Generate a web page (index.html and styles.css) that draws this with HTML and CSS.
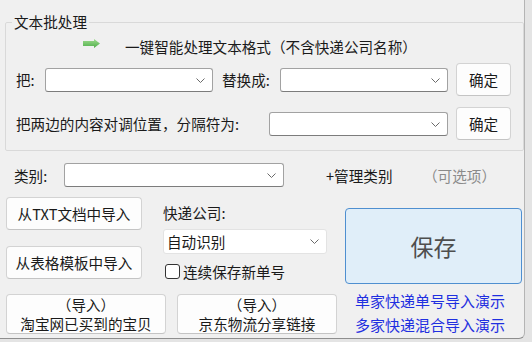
FILE: index.html
```html
<!DOCTYPE html>
<html lang="zh-CN">
<head>
  <meta charset="UTF-8" />
  <title>文本批处理</title>
  <link rel="stylesheet" href="styles.css">
</head>
<body>
  <div class="window">

    <fieldset class="group">
      <legend>文本批处理</legend>

      <div class="row tip">
        <svg class="arrow" width="17" height="9" viewBox="0 0 17 9">
          <defs>
            <linearGradient id="g" x1="0" y1="0" x2="0" y2="1">
              <stop offset="0" stop-color="#9edc8e"/>
              <stop offset="1" stop-color="#4fae4a"/>
            </linearGradient>
          </defs>
          <path d="M0 2 H11 V0 L17 4.5 L11 9 V7 H0 Z" fill="url(#g)"/>
        </svg>
        <span>一键智能处理文本格式（不含快递公司名称）</span>
      </div>

      <div class="row line">
        <label class="lbl lbl-ba">把:</label>
        <div class="combo w168"><svg class="chev" width="9" height="5" viewBox="0 0 9 5"><path d="M0.5 0.5 L4.5 4.5 L8.5 0.5" /></svg></div>
        <label class="lbl lbl-to">替换成:</label>
        <div class="combo w168"><svg class="chev" width="9" height="5" viewBox="0 0 9 5"><path d="M0.5 0.5 L4.5 4.5 L8.5 0.5" /></svg></div>
        <button class="btn ok">确定</button>
      </div>

      <div class="row line swap">
        <label class="lbl lbl-swap">把两边的内容对调位置，分隔符为:</label>
        <div class="combo w179"><svg class="chev" width="9" height="5" viewBox="0 0 9 5"><path d="M0.5 0.5 L4.5 4.5 L8.5 0.5" /></svg></div>
        <button class="btn ok">确定</button>
      </div>
    </fieldset>

    <div class="row cat">
      <label class="lbl lbl-cat">类别:</label>
      <div class="combo w220"><svg class="chev" width="9" height="5" viewBox="0 0 9 5"><path d="M0.5 0.5 L4.5 4.5 L8.5 0.5" /></svg></div>
      <span class="manage">+管理类别</span>
      <span class="optional">（可选项）</span>
    </div>

    <div class="main">
      <div class="col-import">
        <button class="btn imp">从TXT文档中导入</button>
        <button class="btn imp">从表格模板中导入</button>
      </div>

      <div class="col-express">
        <div class="exp-label">快递公司:</div>
        <div class="combo plain w164">自动识别<svg class="chev" width="9" height="5" viewBox="0 0 9 5"><path d="M0.5 0.5 L4.5 4.5 L8.5 0.5" /></svg></div>
        <label class="check"><span class="box"></span>连续保存新单号</label>
      </div>

      <button class="save">保存</button>
    </div>

    <div class="bottom">
      <button class="btn two">（导入）<br>淘宝网已买到的宝贝</button>
      <button class="btn two">（导入）<br>京东物流分享链接</button>
      <div class="links">
        <a href="#">单家快递单号导入演示</a>
        <a href="#">多家快递混合导入演示</a>
      </div>
    </div>

  </div>
</body>
</html>
```

FILE: styles.css
```css
* {
  box-sizing: border-box;
}

body {
  margin: 0;
  background: #e4e4e4;
  font-family: "Noto Sans CJK SC", "Noto Sans", sans-serif;
  font-size: 14.6px;
  color: #1a1a1a;
}

.window {
  width: 525px;
  height: 339px;
  background: #f0f0f0;
  border-right: 1px solid #b4b4b4;
  border-bottom: 1px solid #8e8e8e;
  border-bottom-right-radius: 6px;
  overflow: hidden;
}

.group {
  width: 519px;
  margin: 13px 0 0 5px;
  padding: 0 0 10px 10px;
  border: 1px solid #d9d9d9;
  border-radius: 2px;
}

.group legend {
  margin-left: -4px;
  padding: 0 2px;
  line-height: 18px;
}

.row {
  display: flex;
  align-items: center;
}

.tip {
  height: 30px;
}

.arrow {
  margin: 0 25px 6px 67px;
}

.line {
  height: 33px;
  margin-top: 2px;
}

.swap {
  margin-top: 11px;
}

.lbl {
  white-space: nowrap;
}

.lbl-ba { width: 29px; }
.lbl-to { width: 58px; margin-left: 9px; }
.lbl-swap { width: 253px; }
.lbl-cat { width: 50px; }

.combo {
  position: relative;
  height: 24px;
  background: #fff;
  border: 1px solid #a2a2a2;
  border-bottom-color: #7c7c7c;
  border-radius: 3px;
}

.w168 { width: 168px; }
.w179 { width: 179px; }
.w220 { width: 220px; }
.w164 { width: 164px; }

.chev {
  position: absolute;
  right: 7px;
  top: 9px;
  fill: none;
  stroke: #6a6a6a;
  stroke-width: 1;
}

.btn {
  font-family: inherit;
  font-size: 14.6px;
  color: #1a1a1a;
  background: #fdfdfd;
  border: 1px solid #d3d3d3;
  border-bottom-color: #c4c4c4;
  border-radius: 4px;
  padding: 0;
  cursor: pointer;
}

.btn:hover {
  background: #f6f6f6;
}

.ok {
  width: 55px;
  height: 33px;
  margin-left: 8px;
}

.cat {
  height: 24px;
  margin-top: 12px;
  padding-left: 14px;
}

.manage {
  width: 97px;
  margin-left: 42px;
}

.optional {
  color: #8a8a8a;
}

.main {
  display: flex;
  align-items: flex-start;
  margin-top: 10px;
  height: 87px;
}

.col-import {
  display: flex;
  flex-direction: column;
  gap: 16px;
  margin-left: 6px;
}

.imp {
  width: 136px;
  height: 33px;
}

.col-express {
  width: 164px;
  margin-left: 21px;
}

.exp-label {
  height: 32px;
  line-height: 32px;
}

.combo.plain {
  height: 25px;
  line-height: 23px;
  padding-left: 3px;
  border: 1px solid #e3e3e3;
}

.check {
  display: flex;
  align-items: center;
  height: 17px;
  margin-top: 9px;
  padding-left: 2px;
}

.box {
  width: 15px;
  height: 15px;
  margin-right: 3px;
  border: 1px solid #333;
  border-radius: 3px;
  background: #fff;
}

.save {
  width: 177px;
  height: 76px;
  margin: 11px 0 0 18px;
  font-family: inherit;
  font-size: 23px;
  color: #4e4e4e;
  background: #e0eef9;
  border: 1px solid #4f8fd0;
  border-radius: 4px;
  cursor: pointer;
}

.bottom {
  display: flex;
  align-items: flex-start;
  margin-top: 10px;
  padding-left: 6px;
}

.two {
  width: 160px;
  height: 40px;
  line-height: 19px;
}

.two + .two {
  margin-left: 11px;
}

.links {
  display: flex;
  flex-direction: column;
  margin: -5px 0 0 18px;
  line-height: 24px;
}

.links a {
  font-size: 15px;
  color: #1f2fe0;
  text-decoration: none;
}
```
